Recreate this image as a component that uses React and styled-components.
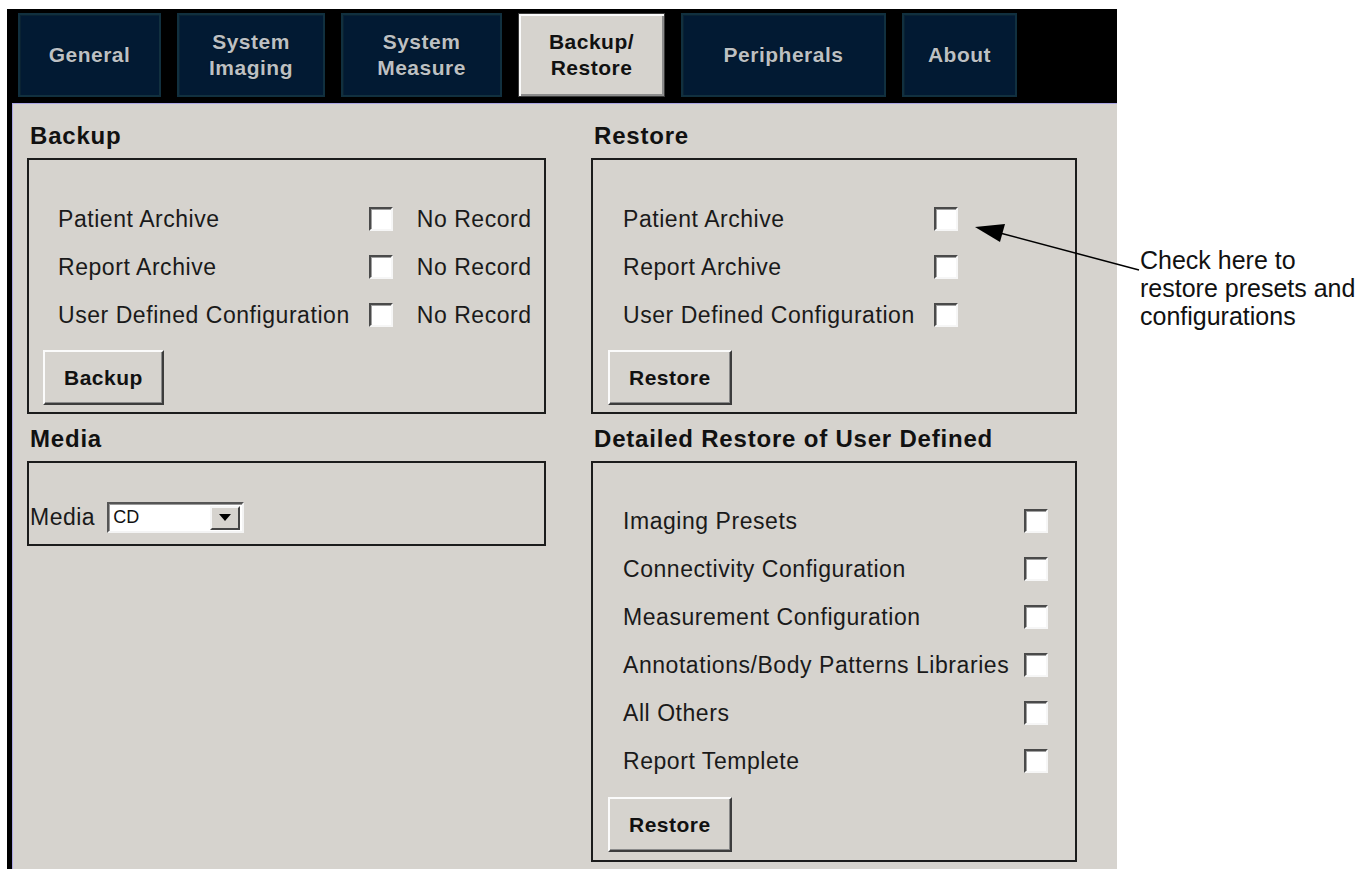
import React from 'react'
import styled, { createGlobalStyle } from 'styled-components'

const Global = createGlobalStyle`
  html, body {
    margin: 0;
    padding: 0;
    background: #fff;
  }
  body {
    font-family: "Liberation Sans", Arial, sans-serif;
    color: #111;
  }
`

const Page = styled.div`
  position: relative;
  display: flex;
  align-items: flex-start;
  width: 1363px;
  height: 869px;
  overflow: hidden;
`

const Frame = styled.div`
  margin: 9px 0 0 7px;
  width: 1110px;
  height: 860px;
  flex-shrink: 0;
  display: flex;
  flex-direction: column;
  background: #000;
`

const TabBar = styled.div`
  display: flex;
  gap: 16px;
  height: 94px;
  padding: 4px 0 0 11px;
  box-sizing: border-box;
`

const Tab = styled.div`
  width: ${p => p.w}px;
  height: 84px;
  box-sizing: border-box;
  display: flex;
  align-items: center;
  justify-content: center;
  text-align: center;
  font-weight: bold;
  font-size: 21px;
  line-height: 26px;
  letter-spacing: 0.5px;
  background: ${p => p.active ? '#d6d3ce' : '#021a33'};
  color: ${p => p.active ? '#111' : '#bcc0c4'};
  border: ${p => p.active ? '1px solid #3a3a3a' : '2px solid #11303f'};
  box-shadow: ${p => p.active
    ? 'inset 2px 2px 0 #fafafa, inset -2px -2px 0 #8c8c8c'
    : 'inset 1px 1px 0 #0a2233'};
  text-shadow: ${p => p.active ? 'none' : '0 0 1px #000'};
`

const Panel = styled.div`
  flex: 1;
  margin-left: 5px;
  background: #d6d3ce;
  border-top: 1px solid #a9a5e2;
  border-left: 1px solid #a9a5e2;
  display: grid;
  grid-template-columns: 519px 486px;
  column-gap: 45px;
  align-content: start;
  padding: 8px 0 0 14px;
`

const Column = styled.div`
  display: flex;
  flex-direction: column;
`

const Heading = styled.div`
  font-size: 24px;
  font-weight: bold;
  letter-spacing: 0.8px;
  line-height: 28px;
  padding: ${p => p.first ? '10px' : '11px'} 3px 8px;
`

const Box = styled.div`
  border: 2px solid #1c1c1c;
  padding: ${p => p.pad};
  display: flex;
  flex-direction: column;
  align-items: flex-start;
`

const Rows = styled.div`
  display: grid;
  grid-template-columns: ${p => p.cols};
  grid-auto-rows: 48px;
  align-items: center;
  column-gap: ${p => p.gap || 19}px;
  margin-left: 15px;
  font-size: 23px;
  letter-spacing: 0.55px;
  color: #1a1a1a;
`

const Note = styled.span`
  margin-left: 5px;
`

const Check = styled.span`
  width: 24px;
  height: 24px;
  box-sizing: border-box;
  background: #fff;
  border: 2px solid;
  border-color: #4a4a4a #f6f6f6 #f6f6f6 #4a4a4a;
  box-shadow: inset 1px 1px 0 #a0a0a0;
`

const Button = styled.div`
  height: 55px;
  box-sizing: border-box;
  padding: 0 19px;
  margin-top: ${p => p.mt}px;
  display: flex;
  align-items: center;
  font-size: 21px;
  font-weight: bold;
  letter-spacing: 0.5px;
  background: #d6d3ce;
  border: 2px solid;
  border-color: #fbfbfb #3c3c3c #3c3c3c #fbfbfb;
  box-shadow: inset -1px -1px 0 #8a8a8a;
`

const MediaRow = styled.div`
  display: flex;
  align-items: center;
  gap: 12px;
  font-size: 23px;
  letter-spacing: 0.5px;
  color: #1a1a1a;
`

const Select = styled.div`
  width: 137px;
  height: 31px;
  box-sizing: border-box;
  display: flex;
  align-items: center;
  justify-content: space-between;
  background: #fff;
  border: 2px solid;
  border-color: #555 #f4f4f4 #f4f4f4 #555;
  box-shadow: inset 1px 1px 0 #999;
  padding: 0 2px 0 4px;
  font-size: 18px;
  letter-spacing: 0;
  color: #111;
`

const DropButton = styled.span`
  width: 30px;
  height: 24px;
  box-sizing: border-box;
  display: flex;
  align-items: center;
  justify-content: center;
  background: #d6d3ce;
  border: 2px solid;
  border-color: #f6f6f6 #444 #444 #f6f6f6;
`

const Callout = styled.div`
  margin: 246px 0 0 23px;
  font-size: 25px;
  line-height: 28px;
  color: #111;
  white-space: nowrap;
`

const Arrow = styled.svg`
  position: absolute;
  left: 0;
  top: 0;
  pointer-events: none;
`

const tabs = [
  { w: 143, label: ['General'] },
  { w: 148, label: ['System', 'Imaging'] },
  { w: 161, label: ['System', 'Measure'] },
  { w: 147, label: ['Backup/', 'Restore'], active: true },
  { w: 205, label: ['Peripherals'] },
  { w: 115, label: ['About'] },
]

const archives = ['Patient Archive', 'Report Archive', 'User Defined Configuration']

const detailed = [
  'Imaging Presets',
  'Connectivity Configuration',
  'Measurement Configuration',
  'Annotations/Body Patterns Libraries',
  'All Others',
  'Report Templete',
]

export default function App() {
  return (
    <Page>
      <Global />
      <Frame>
        <TabBar>
          {tabs.map(t => (
            <Tab key={t.label.join()} w={t.w} active={t.active}>
              <div>
                {t.label.map(l => <div key={l}>{l}</div>)}
              </div>
            </Tab>
          ))}
        </TabBar>
        <Panel>
          <Column>
            <Heading first>Backup</Heading>
            <Box pad="35px 14px 7px 14px">
              <Rows cols="max-content 24px max-content">
                {archives.map(a => (
                  <React.Fragment key={a}>
                    <span>{a}</span>
                    <Check />
                    <Note>No Record</Note>
                  </React.Fragment>
                ))}
              </Rows>
              <Button mt={11}>Backup</Button>
            </Box>
            <Heading>Media</Heading>
            <Box pad="39px 0 11px 1px">
              <MediaRow>
                Media
                <Select>
                  CD
                  <DropButton>
                    <svg width="12" height="8" viewBox="0 0 12 8">
                      <polygon points="0,0 12,0 6,7" fill="#000" />
                    </svg>
                  </DropButton>
                </Select>
              </MediaRow>
            </Box>
          </Column>
          <Column>
            <Heading first>Restore</Heading>
            <Box pad="35px 14px 7px 15px">
              <Rows cols="max-content 24px">
                {archives.map(a => (
                  <React.Fragment key={a}>
                    <span>{a}</span>
                    <Check />
                  </React.Fragment>
                ))}
              </Rows>
              <Button mt={11}>Restore</Button>
            </Box>
            <Heading>Detailed Restore of User Defined</Heading>
            <Box pad="34px 14px 8px 15px">
              <Rows cols="max-content 24px" gap={15}>
                {detailed.map(a => (
                  <React.Fragment key={a}>
                    <span>{a}</span>
                    <Check />
                  </React.Fragment>
                ))}
              </Rows>
              <Button mt={12}>Restore</Button>
            </Box>
          </Column>
        </Panel>
      </Frame>
      <Callout>
        Check here to<br />
        restore presets and<br />
        configurations
      </Callout>
      <Arrow width="1363" height="869">
        <line x1="1000" y1="233" x2="1139" y2="270" stroke="#000" strokeWidth="1.5" />
        <polygon points="975,227 1000,242 1005,224" fill="#000" />
      </Arrow>
    </Page>
  )
}
